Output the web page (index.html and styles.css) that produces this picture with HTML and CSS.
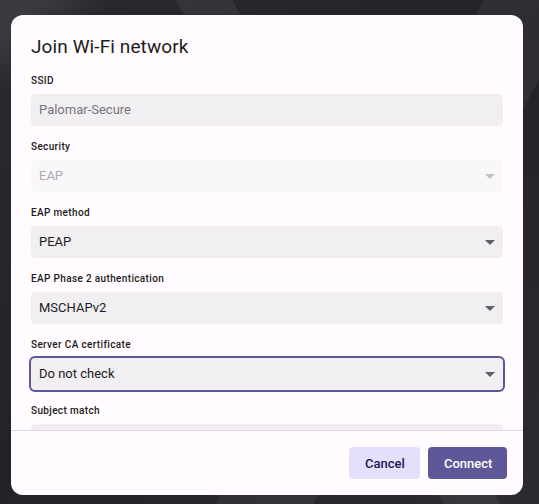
FILE: index.html
```html
<!DOCTYPE html>
<html lang="en">
<head>
<meta charset="utf-8">
<title>Join Wi-Fi network</title>
<link rel="stylesheet" href="styles.css">
</head>
<body>
<div class="desktop">
  <div class="dialog">
    <div class="header">
      <h1 class="title">Join Wi-Fi network</h1>
    </div>
    <div class="body">
      <div class="group">
        <div class="label">SSID</div>
        <div class="field readonly">Palomar-Secure</div>
      </div>
      <div class="group">
        <div class="label">Security</div>
        <div class="field select disabled">EAP<span class="arrow"></span></div>
      </div>
      <div class="group">
        <div class="label">EAP method</div>
        <div class="field select">PEAP<span class="arrow"></span></div>
      </div>
      <div class="group">
        <div class="label">EAP Phase 2 authentication</div>
        <div class="field select">MSCHAPv2<span class="arrow"></span></div>
      </div>
      <div class="group">
        <div class="label">Server CA certificate</div>
        <div class="field select focused">Do not check<span class="arrow"></span></div>
      </div>
      <div class="group">
        <div class="label">Subject match</div>
        <div class="field"></div>
      </div>
    </div>
    <div class="footer">
      <button class="btn cancel">Cancel</button>
      <button class="btn connect">Connect</button>
    </div>
  </div>
</div>
</body>
</html>
```
FILE: styles.css
```css
html, body {
  margin: 0;
  padding: 0;
}
body {
  width: 539px;
  height: 504px;
  overflow: hidden;
  font-family: Roboto, "Liberation Sans", sans-serif;
  background-color: #27272b;
  background-image:
    linear-gradient(118deg, rgba(255,255,255,0) 0 60%, rgba(255,255,255,0.05) 60% 72%, rgba(255,255,255,0) 72%),
    linear-gradient(62deg, rgba(255,255,255,0) 0 55%, rgba(255,255,255,0.06) 55% 62%, rgba(255,255,255,0) 62%),
    linear-gradient(140deg, #3a3a3e 0 4%, #29292d 10%, #232327 50%, #2c2c30 100%);
}
.desktop {
  padding: 15px 16px 9px 11px;
  display: flex;
}
.dialog {
  width: 512px;
  height: 480px;
  background: #fffbfe;
  border-radius: 12px;
  display: flex;
  flex-direction: column;
  overflow: hidden;
}
.header {
  padding: 20px 20px 14px;
}
.title {
  margin: 0;
  font-size: 19px;
  line-height: 24px;
  font-weight: 400;
  color: #1d1b20;
  letter-spacing: 0.1px;
}
.body {
  flex: 1;
  overflow: hidden;
  padding: 0 20px;
}
.group {
  display: flex;
  flex-direction: column;
  gap: 6px;
  margin-bottom: 13px;
}
.label {
  height: 15px;
  padding-top: 1px;
  box-sizing: border-box;
  line-height: 14px;
  font-size: 10px;
  font-weight: 500;
  letter-spacing: 0.35px;
  color: #1d1b20;
}
.field {
  position: relative;
  height: 32px;
  line-height: 32px;
  box-sizing: border-box;
  padding: 0 8px;
  border-radius: 4px;
  background: #f2eff3;
  font-size: 13px;
  color: #1d1b20;
}
.field.readonly {
  color: #77757b;
}
.field.disabled {
  background: #faf7fa;
  color: #aeacb0;
}
.field.focused {
  box-shadow: 0 0 0 2px #5d5898;
}
.arrow {
  position: absolute;
  right: 8px;
  top: 14px;
  width: 0;
  height: 0;
  border-left: 5px solid transparent;
  border-right: 5px solid transparent;
  border-top: 5px solid #5f5e63;
}
.disabled .arrow {
  border-top-color: #c4c2c6;
}
.footer {
  border-top: 1px solid #dedbe0;
  padding: 16px 16px 16px 20px;
  display: flex;
  justify-content: flex-end;
  gap: 8px;
}
.btn {
  height: 32px;
  border: none;
  border-radius: 4px;
  font-family: Roboto, "Liberation Sans", sans-serif;
  font-size: 13px;
  font-weight: 500;
  padding: 0 16px;
  cursor: pointer;
}
.cancel {
  width: 71px;
  background: #e4e0fb;
  color: #1c1950;
}
.connect {
  width: 79px;
  background: #5e5898;
  color: #ffffff;
}
```
